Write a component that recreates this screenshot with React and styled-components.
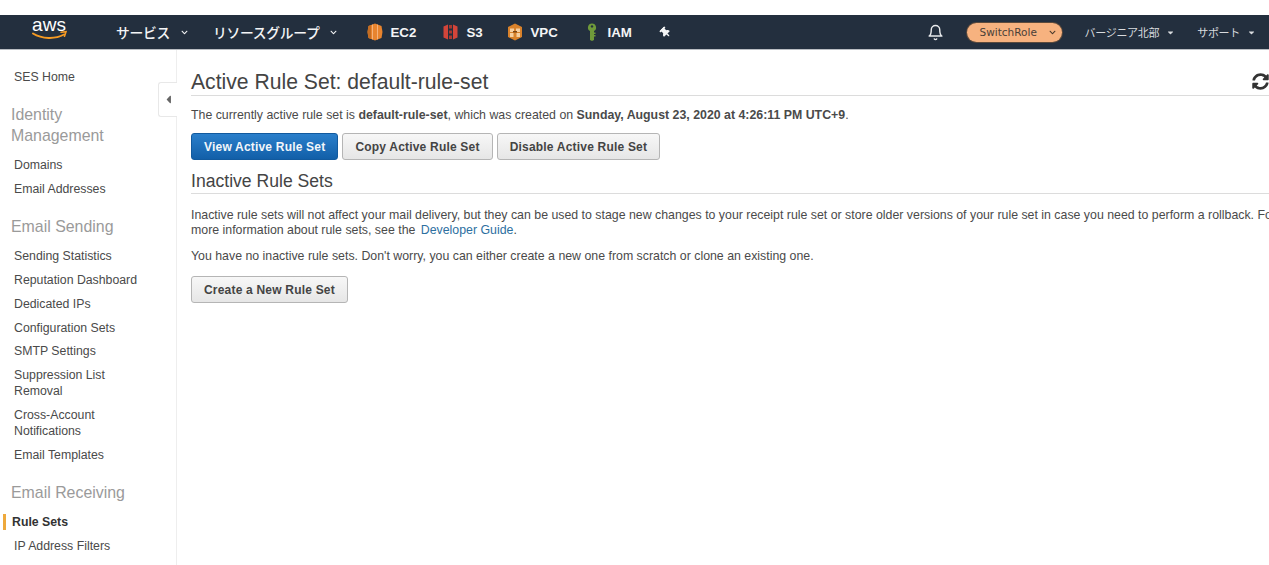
import React from 'react';
import styled, { createGlobalStyle } from 'styled-components';
import { FaCaretDown, FaCaretLeft, FaChevronDown, FaThumbtack, FaSyncAlt } from 'react-icons/fa';
import { LuBell } from 'react-icons/lu';

const GlobalStyle = createGlobalStyle`
  html, body {
    margin: 0;
    padding: 0;
    background: #fff;
    overflow: hidden;
  }
  body {
    font-family: "Liberation Sans", Arial, sans-serif;
    color: #444;
  }
`;

const Page = styled.div`
  width: 1269px;
  height: 565px;
  padding-top: 15px;
  box-sizing: border-box;
  display: flex;
  flex-direction: column;
  overflow: hidden;
`;

const NavBar = styled.div`
  height: 34px;
  flex: none;
  background: #232f3e;
  border-bottom: 1px solid #b9bdc2;
  display: flex;
  align-items: center;
  color: #fff;
`;

const Logo = styled.div`
  width: 36px;
  margin-left: 32px;
  margin-right: 48px;
  display: flex;
`;

const NavMenu = styled.div`
  display: flex;
  align-items: center;
  gap: ${p => p.$gap || 8}px;
  margin-right: ${p => p.$right || 0}px;
  font-family: "Noto Sans CJK JP", sans-serif;
  font-size: 13.8px;
  font-weight: 500;
  color: #f4f5f6;
  letter-spacing: -0.3px;
  white-space: nowrap;
`;

const Shortcut = styled.div`
  display: flex;
  align-items: center;
  gap: ${p => p.$gap}px;
  width: ${p => p.$width}px;
  flex: none;
  font-size: 13.3px;
  font-weight: 700;
  color: #f4f5f6;
`;

const Pin = styled(FaThumbtack)`
  color: #f4f5f6;
  transform: rotate(-45deg);
`;

const Spacer = styled.div`
  flex: 1;
`;

const RolePill = styled.div`
  width: 95px;
  height: 19px;
  box-sizing: border-box;
  padding: 0 6px 0 13px;
  margin: 0 23px 0 23px;
  border-radius: 10px;
  background: #f7b27f;
  box-shadow: 0 0 0 1px #5c4a3c;
  color: #4a4038;
  font-family: "DejaVu Sans", sans-serif;
  font-size: 10.5px;
  display: flex;
  align-items: center;
  justify-content: space-between;
`;

const RegionMenu = styled.div`
  display: flex;
  align-items: center;
  gap: 7px;
  margin-right: ${p => p.$right}px;
  font-family: "Noto Sans CJK JP", sans-serif;
  font-size: 11px;
  color: #d8dbde;
  white-space: nowrap;
  letter-spacing: -0.3px;
`;

const Body = styled.div`
  flex: 1;
  display: flex;
  position: relative;
  min-height: 0;
`;

const Sidebar = styled.nav`
  width: 177px;
  flex: none;
  box-sizing: border-box;
  padding-top: 19px;
  border-right: 1px solid #eeeeee;
  font-size: 12.3px;
`;

const NavItem = styled.div`
  padding: 0 30px 7.75px 14px;
  line-height: 16px;
  color: #4a4a4a;
`;

const ActiveItem = styled.div`
  margin-left: 3px;
  padding-left: 6px;
  border-left: 3px solid #eea93c;
  margin-bottom: 7.75px;
  line-height: 16px;
  font-weight: 700;
  color: #333;
`;

const GroupTitle = styled.div`
  padding: 11.5px 40px 11px 11px;
  font-size: 15.9px;
  line-height: 21px;
  color: #9a9a9a;
`;

const CollapseTab = styled.div`
  position: absolute;
  left: 158px;
  top: 32px;
  width: 19px;
  height: 35px;
  box-sizing: border-box;
  background: #fff;
  border: 1px solid #e8e8e8;
  border-right: none;
  border-radius: 3px 0 0 3px;
  display: flex;
  align-items: center;
  justify-content: center;
  color: #666;
  font-size: 13px;
`;

const Main = styled.main`
  flex: 1;
  min-width: 0;
  padding: 18px 0 0 14px;
  overflow: hidden;
`;

const TitleRow = styled.div`
  display: flex;
  align-items: center;
  justify-content: space-between;
  height: 27px;
  border-bottom: 1px solid #dcdcdc;
  color: #333;
`;

const Title = styled.h1`
  margin: 0;
  font-size: 21.15px;
  font-weight: 400;
  line-height: 26px;
  color: #444;
`;

const RefreshIcon = styled.span`
  display: flex;
  font-size: 17px;
  color: #333;
`;

const Text = styled.p`
  margin: ${p => p.$top || 0}px 0 0;
  font-size: 12.35px;
  line-height: 15px;
  color: #4a4a4a;
  white-space: nowrap;
`;

const Link = styled.a`
  color: #2d6f9f;
  margin-left: 2px;
`;

const ButtonRow = styled.div`
  display: flex;
  gap: 4px;
  margin-top: ${p => p.$top}px;
`;

const Button = styled.button`
  height: 27px;
  box-sizing: border-box;
  padding: 0 12px;
  border-radius: 3px;
  border: 1px solid ${p => (p.$primary ? '#125a9e' : '#b5b5b5')};
  background: ${p => (p.$primary
    ? 'linear-gradient(#2a7fcb, #125fa8)'
    : 'linear-gradient(#f7f7f7, #e6e6e6)')};
  color: ${p => (p.$primary ? '#f2f6fa' : '#444')};
  font-family: inherit;
  font-size: 12px;
  font-weight: 700;
  letter-spacing: 0.2px;
  white-space: nowrap;
`;

const SectionTitle = styled.h2`
  margin: 10px 0 0;
  height: 23px;
  font-size: 17.6px;
  font-weight: 400;
  line-height: 23px;
  color: #444;
  border-bottom: 1px solid #dcdcdc;
`;

const AwsLogo = () => (
  <svg width="36" height="38" viewBox="0 -6 36 38">
    <text x="17" y="12" textAnchor="middle" fontFamily="Liberation Sans, sans-serif" fontSize="19" fill="#fff">aws</text>
    <path d="M1 14.5c9 5.5 22 6 31 1" fill="none" stroke="#f59a23" strokeWidth="2" strokeLinecap="round" />
    <path d="M29 13.2l5-.5-1.5 4.6" fill="none" stroke="#f59a23" strokeWidth="1.6" strokeLinecap="round" />
  </svg>
);

const Ec2Icon = () => (
  <svg width="16" height="18" viewBox="0 0 16 18">
    <path d="M8 0.5l6.5 2.5 1 6-1 6-6.5 2.5-6.5-2.5-1-6 1-6z" fill="#e8842e" />
    <path d="M5.5 1.6v14.8M10.5 1.6v14.8" stroke="#f5b27a" strokeWidth="1" />
    <path d="M1.5 3l-1 6 1 6 2.5 1V2z" fill="#c46d22" />
  </svg>
);

const S3Icon = () => (
  <svg width="15" height="18" viewBox="0 0 15 18">
    <path d="M0.5 3.5l4.5-2v15l-4.5-2zM14.5 3.5l-4.5-2v15l4.5-2z" fill="#d3453a" />
    <path d="M6 2h3v3.5H6zM6 7.5h3v3H6zM6 12.5h3V16H6z" fill="#a9382f" />
  </svg>
);

const VpcIcon = () => (
  <svg width="16" height="18" viewBox="0 0 16 18">
    <path d="M8 0.5l7 3.5v10l-7 3.5-7-3.5V4z" fill="#d9822b" />
    <path d="M3 5.5h4v3.5H3zM9 5.5h4v3.5H9zM3 10h3.5v4H3zM9.5 10H13v4H9.5z" fill="#f6cfa0" />
    <path d="M6 8h4v1.5H6z" fill="#7a4515" />
  </svg>
);

const KeyIcon = () => (
  <svg width="10" height="18" viewBox="0 0 10 18">
    <path d="M5 0.5a4 4 0 0 1 2 7.5v1.5h1.5v1.5H7v1h1.5v1.5H7V17l-2 1-2-1V8A4 4 0 0 1 5 .5z" fill="#6f9a3a" />
    <circle cx="5" cy="3.4" r="1.2" fill="#232f3e" />
  </svg>
);

function App() {
  return (
    <Page>
      <GlobalStyle />
      <NavBar>
        <Logo><AwsLogo /></Logo>
        <NavMenu $gap={11} $right={25}>サービス <FaChevronDown size={7} /></NavMenu>
        <NavMenu $gap={11} $right={30}>リソースグループ <FaChevronDown size={7} /></NavMenu>
        <Shortcut $gap={7} $width={76}><Ec2Icon />EC2</Shortcut>
        <Shortcut $gap={8} $width={64}><S3Icon />S3</Shortcut>
        <Shortcut $gap={7} $width={80}><VpcIcon />VPC</Shortcut>
        <Shortcut $gap={10} $width={73}><KeyIcon />IAM</Shortcut>
        <Pin size={11} />
        <Spacer />
        <LuBell size={17} color="#e8eaec" />
        <RolePill>SwitchRole <FaChevronDown size={7} color="#4a3a2c" /></RolePill>
        <RegionMenu $right={22}>バージニア北部 <FaCaretDown size={9} /></RegionMenu>
        <RegionMenu $right={13}>サポート <FaCaretDown size={9} /></RegionMenu>
      </NavBar>
      <Body>
        <Sidebar>
          <NavItem>SES Home</NavItem>
          <GroupTitle>Identity Management</GroupTitle>
          <NavItem>Domains</NavItem>
          <NavItem>Email Addresses</NavItem>
          <GroupTitle>Email Sending</GroupTitle>
          <NavItem>Sending Statistics</NavItem>
          <NavItem>Reputation Dashboard</NavItem>
          <NavItem>Dedicated IPs</NavItem>
          <NavItem>Configuration Sets</NavItem>
          <NavItem>SMTP Settings</NavItem>
          <NavItem>Suppression List Removal</NavItem>
          <NavItem>Cross-Account Notifications</NavItem>
          <NavItem>Email Templates</NavItem>
          <GroupTitle>Email Receiving</GroupTitle>
          <ActiveItem>Rule Sets</ActiveItem>
          <NavItem>IP Address Filters</NavItem>
        </Sidebar>
        <CollapseTab><FaCaretLeft /></CollapseTab>
        <Main>
          <TitleRow>
            <Title>Active Rule Set: default-rule-set</Title>
            <RefreshIcon><FaSyncAlt /></RefreshIcon>
          </TitleRow>
          <Text $top={12}>
            The currently active rule set is <b>default-rule-set</b>, which was created on <b>Sunday, August 23, 2020 at 4:26:11 PM UTC+9</b>.
          </Text>
          <ButtonRow $top={10}>
            <Button $primary>View Active Rule Set</Button>
            <Button>Copy Active Rule Set</Button>
            <Button>Disable Active Rule Set</Button>
          </ButtonRow>
          <SectionTitle>Inactive Rule Sets</SectionTitle>
          <Text $top={14}>
            Inactive rule sets will not affect your mail delivery, but they can be used to stage new changes to your receipt rule set or store older versions of your rule set in case you need to perform a rollback. For
            <br />
            more information about rule sets, see the <Link>Developer Guide</Link>.
          </Text>
          <Text $top={11}>You have no inactive rule sets. Don't worry, you can either create a new one from scratch or clone an existing one.</Text>
          <ButtonRow $top={12}>
            <Button>Create a New Rule Set</Button>
          </ButtonRow>
        </Main>
      </Body>
    </Page>
  );
}

export default App;
